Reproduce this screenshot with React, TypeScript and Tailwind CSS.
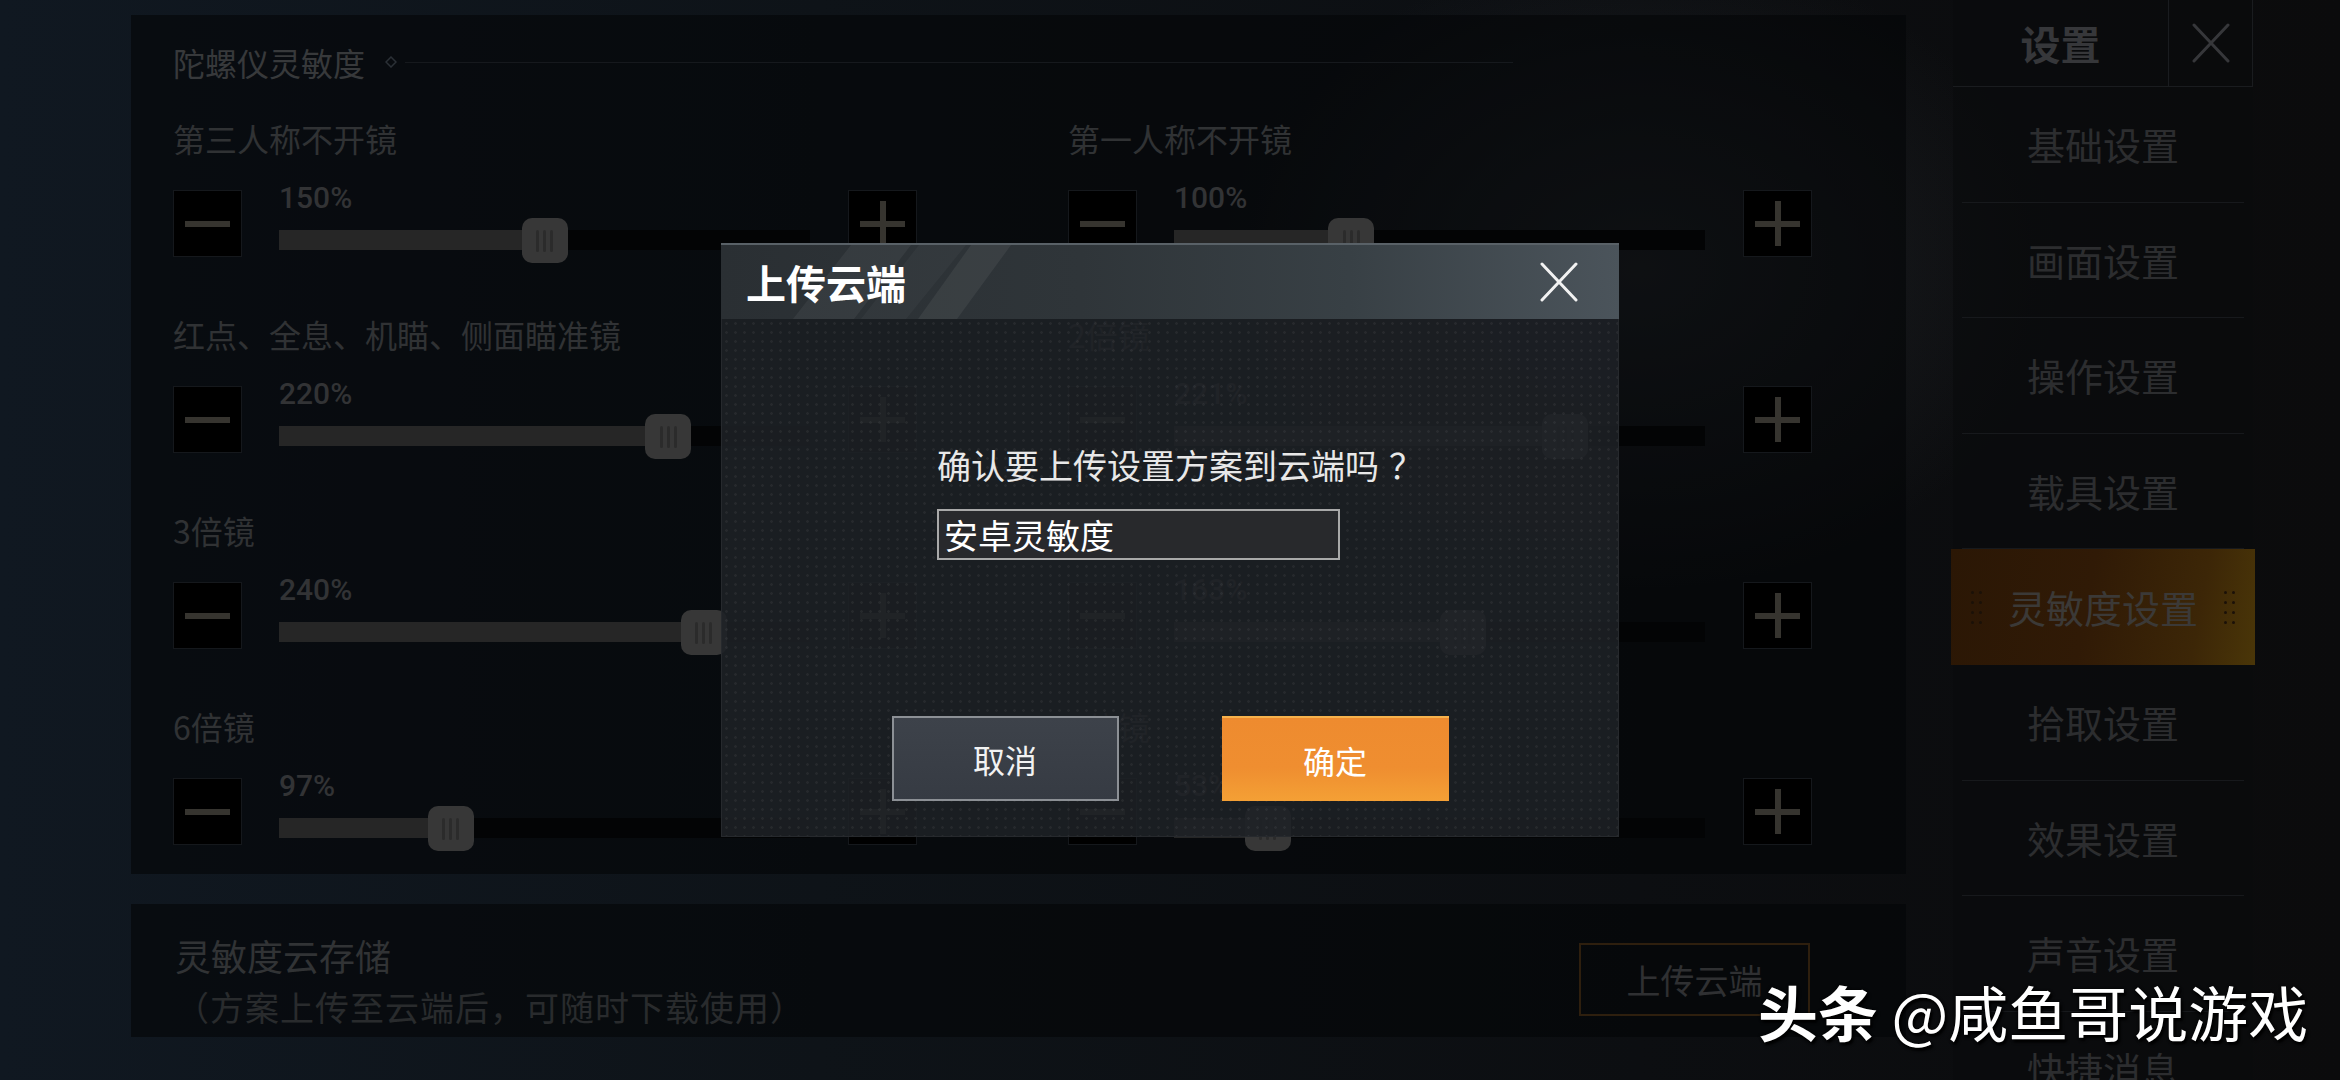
import React from "react";

type Cell = { label: string; value: number };

const rows: Cell[][] = [
  [
    { label: "第三人称不开镜", value: 150 },
    { label: "第一人称不开镜", value: 100 },
  ],
  [
    { label: "红点、全息、机瞄、侧面瞄准镜", value: 220 },
    { label: "2倍镜", value: 221 },
  ],
  [
    { label: "3倍镜", value: 240 },
    { label: "4倍镜", value: 163 },
  ],
  [
    { label: "6倍镜", value: 97 },
    { label: "8倍镜", value: 53 },
  ],
];

const menu = [
  "基础设置",
  "画面设置",
  "操作设置",
  "载具设置",
  "灵敏度设置",
  "拾取设置",
  "效果设置",
  "声音设置",
  "快捷消息",
];

function StepButton({ plus }: { plus?: boolean }) {
  return (
    <div className="relative flex h-[67px] w-[69px] shrink-0 items-center justify-center border border-[#15181c] bg-black">
      <span className="h-[6px] w-[45px] bg-[#36342f]" />
      {plus && <span className="absolute h-[45px] w-[6px] bg-[#36342f]" />}
    </div>
  );
}

function Slider({ value }: { value: number }) {
  const pct = (value / 300) * 100;
  return (
    <div className="-mt-[7px] flex w-[531px] shrink-0 flex-col">
      <span className="h-[30px] font-['Roboto',sans-serif] text-[30px] font-medium leading-[30px] text-[#323335]">
        {value}%
      </span>
      <div className="relative mt-[17px] h-[20px] bg-[#030405]">
        <div className="h-full bg-[#262626]" style={{ width: `${pct}%` }} />
        <div
          className="absolute top-[-12px] flex h-[45px] w-[46px] -translate-x-1/2 items-center justify-center gap-[4px] rounded-[10px] bg-[#373737]"
          style={{ left: `${pct}%` }}
        >
          <span className="h-[22px] w-[3px] rounded-full bg-[#2b2b2b]" />
          <span className="h-[22px] w-[3px] rounded-full bg-[#2b2b2b]" />
          <span className="h-[22px] w-[3px] rounded-full bg-[#2b2b2b]" />
        </div>
      </div>
    </div>
  );
}

function SensCell({ cell }: { cell: Cell }) {
  return (
    <div className="flex flex-col">
      <span className="h-[32px] text-[32px] leading-none text-[#303234]">{cell.label}</span>
      <div className="mt-[36px] flex h-[67px] items-start">
        <StepButton />
        <div className="ml-[37px]">
          <Slider value={cell.value} />
        </div>
        <div className="ml-[38px]">
          <StepButton plus />
        </div>
      </div>
    </div>
  );
}

function CrossIcon({ size, color, width }: { size: number; color: string; width: number }) {
  return (
    <svg width={size} height={size} viewBox="0 0 40 40" fill="none">
      <path d="M3 2 L37 38 M37 2 L3 38" stroke={color} strokeWidth={width} strokeLinecap="round" />
    </svg>
  );
}

function DotColumn() {
  return (
    <div className="grid grid-cols-2 gap-x-[5px] gap-y-[7px]">
      {Array.from({ length: 8 }).map((_, i) => (
        <span key={i} className="h-[3px] w-[3px] rounded-full bg-[#1b1108]" />
      ))}
    </div>
  );
}

export default function App() {
  return (
    <div className="relative h-[1080px] w-[2340px] overflow-hidden bg-[radial-gradient(ellipse_420px_320px_at_1640px_270px,rgba(70,74,80,0.32),transparent),linear-gradient(90deg,#101821,#0e1318_35%,#0c0e11_70%,#0b0b0c)] font-['Noto_Sans_CJK_SC','Noto_Sans',sans-serif]">
      <div className="flex">
        {/* settings panels */}
        <div className="flex flex-col pl-[131px] pt-[15px]">
          <div className="h-[859px] w-[1775px] bg-[#040507]/60 pl-[42px] pt-[31px]">
            <div className="flex h-[32px] items-center">
              <span className="text-[32px] leading-none text-[#37393b]">陀螺仪灵敏度</span>
              <svg width="12" height="12" viewBox="0 0 12 12" className="ml-[20px]">
                <path d="M6 1 L11 6 L6 11 L1 6 Z" fill="none" stroke="#2b3036" strokeWidth="1.5" />
              </svg>
              <span className="ml-[8px] h-px w-[1108px] bg-[#16191d]" />
            </div>
            <div className="mt-[44px] grid grid-cols-[895px_895px] gap-y-[61px]">
              {rows.map((row, i) =>
                row.map((cell, j) => <SensCell key={`${i}-${j}`} cell={cell} />)
              )}
            </div>
          </div>

          <div className="mt-[30px] flex h-[133px] w-[1775px] items-start justify-between bg-[#040507]/60 pl-[44px] pr-[96px]">
            <div className="flex flex-col pt-[33px]">
              <span className="text-[36px] leading-none text-[#313335]">灵敏度云存储</span>
              <span className="mt-[17px] text-[34px] leading-none tracking-[1px] text-[#292b2d]">
                （方案上传至云端后，可随时下载使用）
              </span>
            </div>
            <div className="mt-[39px] flex h-[73px] w-[231px] items-center justify-center border-2 border-[#2e1f0e] text-[34px] leading-none text-[#2f3032]">
              上传云端
            </div>
          </div>
        </div>

        {/* side menu */}
        <aside className="ml-[47px] flex w-[300px] flex-col bg-[#0a0b0d]/70">
          <div className="flex h-[87px] border-b border-[#1a1c1f]">
            <div className="flex flex-1 items-center justify-center text-[40px] font-bold leading-none text-[#36373a]">
              设置
            </div>
            <div className="flex w-[85px] items-center justify-center border-x border-[#1a1c1f]">
              <CrossIcon size={40} color="#36373a" width={3} />
            </div>
          </div>
          {menu.map((item) =>
            item === "灵敏度设置" ? (
              <div
                key={item}
                className="-mx-[2px] flex h-[116px] items-center justify-between bg-[linear-gradient(100deg,#2b1705,#301a06_45%,#3c2607_80%,#4a3608)] px-[20px] text-[38px] leading-none text-[#3b3937]"
              >
                <DotColumn />
                <span>{item}</span>
                <DotColumn />
              </div>
            ) : (
              <div key={item} className="mx-[9px] flex h-[115.5px] shrink-0 items-center justify-center border-b border-[#17191c] text-[38px] leading-none text-[#2c2d2f]">
                {item}
              </div>
            )
          )}
        </aside>
      </div>

      {/* upload dialog */}
      <div className="absolute left-[721px] top-[243px] flex w-[898px] flex-col">
        <div className="relative flex h-[76px] items-center justify-between border-t-2 border-[#596167] bg-[linear-gradient(90deg,#2a2f33,#2f3539_40%,#384045_70%,#4b545b)] pl-[25px] pr-[40px]">
          <svg width="300" height="74" viewBox="0 0 300 74" className="absolute left-0 top-0">
            <polygon points="72,74 133,74 190,0 130,0" fill="rgba(255,255,255,0.05)" />
            <polygon points="140,74 185,74 245,0 198,0" fill="rgba(255,255,255,0.03)" />
            <polygon points="197,74 236,74 290,0 250,0" fill="rgba(255,255,255,0.06)" />
          </svg>
          <span className="relative text-[40px] font-bold leading-none text-white">上传云端</span>
          <CrossIcon size={40} color="#f2f2f2" width={3} />
        </div>
        <div className="flex h-[518px] flex-col border-x border-b border-[#26292d] bg-[#1e2126]/[0.88] bg-[radial-gradient(circle,rgba(255,255,255,0.05)_1px,transparent_1.6px)] bg-[length:9px_9px] pt-[129px]">
          <div className="flex flex-col items-start pl-[215px]">
            <span className="text-[34px] leading-none text-[#e8e8e8]">
              确认要上传设置方案到云端吗<span className="ml-[10px]">？</span>
            </span>
            <div className="mt-[27px] flex h-[51px] w-[403px] items-center border-2 border-[#a9a9a9] bg-[#28292c] pl-[5px] text-[34px] leading-none text-white">
              安卓灵敏度
            </div>
          </div>
          <div className="mt-[156px] flex justify-center gap-[103px]">
            <div className="flex h-[85px] w-[227px] items-center justify-center border-2 border-[#8c9095] bg-[linear-gradient(180deg,#3d424a,#363b43)] text-[32px] leading-none text-[#f2f2f2]">
              取消
            </div>
            <div className="flex h-[85px] w-[227px] items-center justify-center border-t-2 border-[#f7b24c] bg-[linear-gradient(180deg,#ee8b2f,#ef8e30_60%,#f4a035)] text-[32px] leading-none text-white">
              确定
            </div>
          </div>
        </div>
      </div>

      {/* watermark */}
      <div className="absolute left-[1758px] top-[981px] whitespace-nowrap text-[60px] leading-none text-white [text-shadow:0_0_3px_#000,2px_3px_3px_#000]">
        <span className="font-bold">头条</span> @咸鱼哥说游戏
      </div>
    </div>
  );
}
